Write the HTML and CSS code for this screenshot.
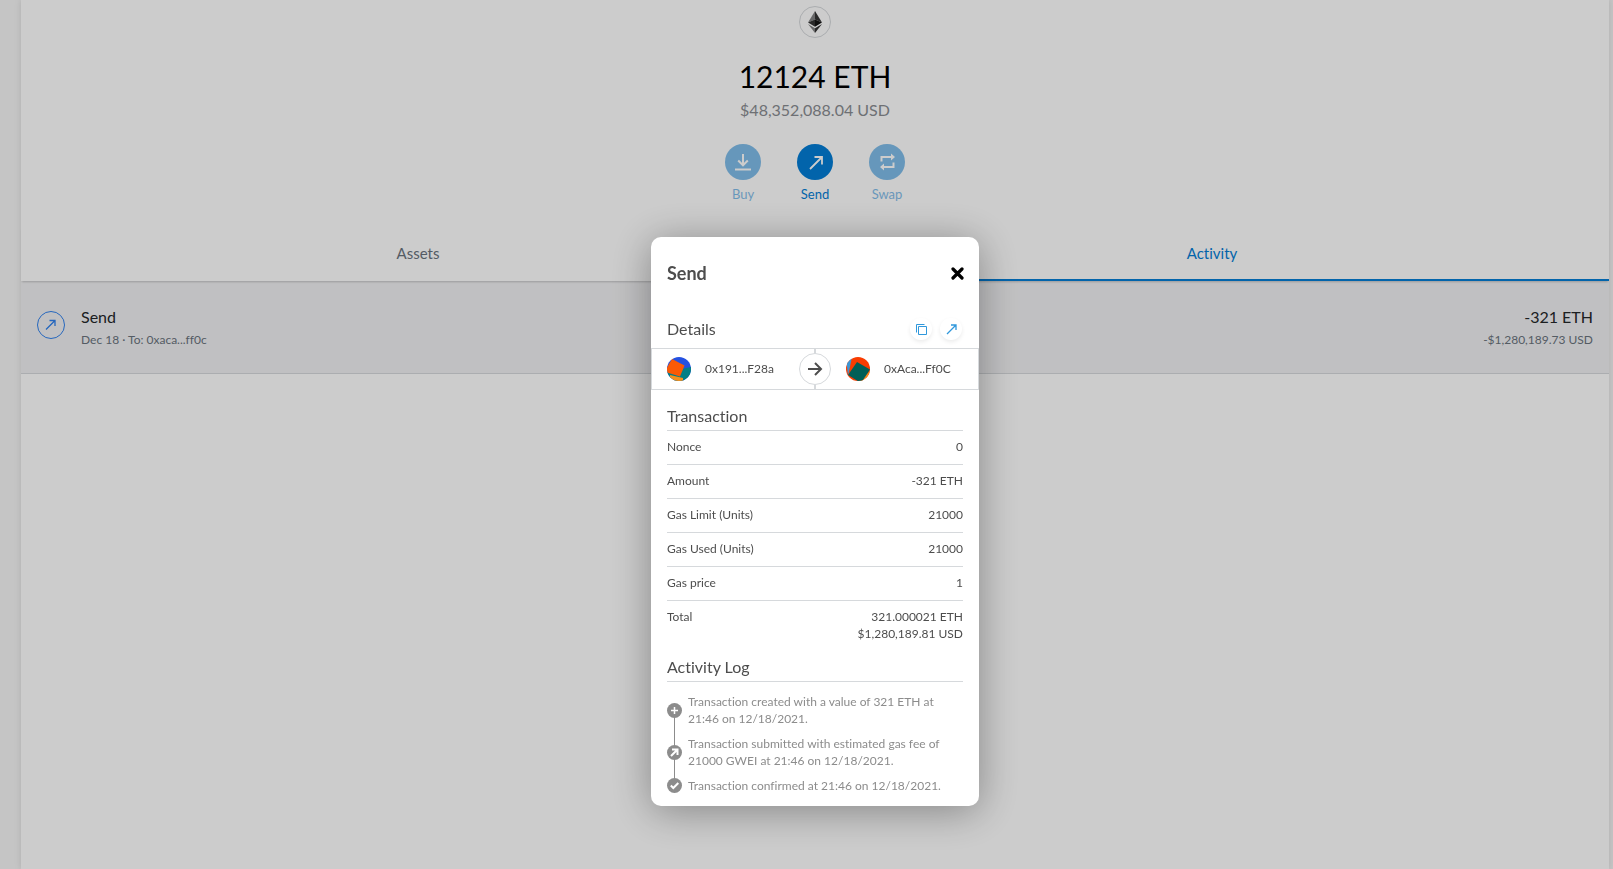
FILE: index.html
```html
<!DOCTYPE html>
<html lang="en">
<head>
<meta charset="utf-8">
<title>Wallet</title>
<link rel="stylesheet" href="styles.css">
</head>
<body>
<main class="wallet">
  <section class="overview">
    <div class="token">
      <svg width="16" height="24" viewBox="0 0 16 24" aria-hidden="true">
        <path d="M8 1 1 12.5 8 9.5z" fill="#828384"/><path d="M8 1v8.500l7 3z" fill="#343434"/>
        <path d="M1 12.500 8 9.500v7.200z" fill="#343434"/><path d="m15 12.500-7-3v7.200z" fill="#131313"/>
        <path d="M1 14l7 4.200V23z" fill="#828384"/><path d="M15 14l-7 4.200V23z" fill="#343434"/>
      </svg>
    </div>
    <h1 class="balance">12124 ETH</h1>
    <p class="fiat">$48,352,088.04 USD</p>
    <div class="actions">
      <button class="action faded" type="button">
        <span class="action-icon"><svg width="18" height="18" viewBox="0 0 18 18" fill="none" stroke="#fff" stroke-width="2"><path d="M9 1v11M4.200 7.500 9 12.300l4.800-4.800M1 16.500h16"/></svg></span>Buy
      </button>
      <button class="action" type="button">
        <span class="action-icon"><svg width="18" height="18" viewBox="0 0 18 18" fill="none" stroke="#fff" stroke-width="1.800"><path d="M4 16 15.500 4.500M8.500 4h7.500v7.500"/></svg></span>Send
      </button>
      <button class="action faded" type="button">
        <span class="action-icon"><svg width="18" height="18" viewBox="0 0 18 18" fill="none" stroke="#fff" stroke-width="2"><path d="M3.500 8.500V4H14M15.500 9.500V14H5"/><path d="M13 .500 17 4l-4 3.500zM6 10.500 2 14l4 3.500z" fill="#fff" stroke="none"/></svg></span>Swap
      </button>
    </div>
  </section>
  <nav class="tabs">
    <button class="tab" type="button">Assets</button>
    <button class="tab active" type="button">Activity</button>
  </nav>
  <section class="activity">
    <svg class="activity-icon" width="28" height="28" viewBox="0 0 28 28" fill="none" stroke="#2f80ed"><circle cx="14" cy="14" r="13.500"/><path d="m9 18.500 8.500-8.500M12.500 9.500h5.500v5.500" stroke-width="1.300"/></svg>
    <div class="activity-text">
      <h2 class="activity-title">Send</h2>
      <p class="activity-sub">Dec 18 · To: 0xaca...ff0c</p>
    </div>
    <div class="activity-amount">
      <p class="activity-title">-321 ETH</p>
      <p class="activity-sub">-$1,280,189.73 USD</p>
    </div>
  </section>
</main>

<div class="overlay">
  <div class="modal" role="dialog" aria-labelledby="modal-title">
    <header class="modal-head">
      <h2 class="modal-title" id="modal-title">Send</h2>
      <button class="close" type="button" aria-label="Close"><svg width="13" height="13" viewBox="0 0 13 13" stroke="#000" stroke-width="3.200" stroke-linecap="round"><path d="m2 2 9 9M11 2l-9 9"/></svg></button>
    </header>
    <div class="details">
      <h3 class="heading">Details</h3>
      <div class="tools">
        <button class="tool" type="button" aria-label="Copy"><svg width="11" height="11" viewBox="0 0 11 11" fill="none" stroke="#3098dc"><path d="M2.500 2.500h8v8h-8zM.500 8.500v-8h8"/></svg></button>
        <button class="tool" type="button" aria-label="View on explorer"><svg width="11" height="11" viewBox="0 0 11 11" fill="none" stroke="#3098dc" stroke-width="1.300"><path d="M1 10 10 1M5 1h5v5"/></svg></button>
      </div>
    </div>
    <div class="parties">
      <div class="party">
        <svg width="24" height="24" viewBox="0 0 24 24"><defs><clipPath id="disc"><circle cx="12" cy="12" r="12"/></clipPath></defs><g clip-path="url(#disc)"><path fill="#2451e1" d="M0 0h24v24H0z"/><path fill="#037f86" d="M0 15 24 10v14H0z"/><path fill="#f5901c" d="m3 18 13 3v4H3z"/><path fill="#fb5a05" d="M-2 14 5 2l12.500 6.500-4.500 11L0 15.500z"/></g></svg>
        <span>0x191...F28a</span>
      </div>
      <div class="arrow"><svg width="16" height="16" viewBox="0 0 16 16" fill="none" stroke="#4d4d4d" stroke-width="2"><path d="M1 8h13M8 2l6 6-6 6"/></svg></div>
      <div class="party recipient">
        <svg width="24" height="24" viewBox="0 0 24 24"><g clip-path="url(#disc)"><path fill="#f93c01" d="M0 0h24v24H0z"/><path fill="#3c96d4" d="M0 0h6L2 19z"/><path fill="#f5881b" d="M24 14v10H13z"/><path fill="#015f57" d="M11 5 24 12.500 15 26 2 18z"/></g></svg>
        <span>0xAca...Ff0C</span>
      </div>
    </div>
    <section class="block">
      <h3 class="heading ruled">Transaction</h3>
      <table class="rows">
        <tr><th scope="row">Nonce</th><td>0</td></tr>
        <tr><th scope="row">Amount</th><td>-321 ETH</td></tr>
        <tr><th scope="row">Gas Limit (Units)</th><td>21000</td></tr>
        <tr><th scope="row">Gas Used (Units)</th><td>21000</td></tr>
        <tr><th scope="row">Gas price</th><td>1</td></tr>
        <tr><th scope="row">Total</th><td>321.000021 ETH<br>$1,280,189.81 USD</td></tr>
      </table>
    </section>
    <section class="block log-block">
      <h3 class="heading ruled">Activity Log</h3>
      <ol class="log">
        <li><svg width="15" height="15" viewBox="0 0 15 15" fill="none" stroke="#fff" stroke-width="1.500"><circle cx="7.500" cy="7.500" r="7.500" fill="#8c8c8c" stroke="none"/><path d="M7.500 4v7M4 7.500h7"/></svg><span>Transaction created with a value of 321 ETH at 21:46 on 12/18/2021.</span></li>
        <li><svg width="15" height="15" viewBox="0 0 15 15" fill="none" stroke="#fff" stroke-width="2"><circle cx="7.500" cy="7.500" r="7.500" fill="#8c8c8c" stroke="none"/><path d="m4 11 6-6M5 4.500h5.500V10"/></svg><span>Transaction submitted with estimated gas fee of 21000 GWEI at 21:46 on 12/18/2021.</span></li>
        <li><svg width="15" height="15" viewBox="0 0 15 15" fill="none" stroke="#fff" stroke-width="2"><circle cx="7.500" cy="7.500" r="7.500" fill="#8c8c8c" stroke="none"/><path d="m3.800 7.500 2.500 2.500 5-5"/></svg><span>Transaction confirmed at 21:46 on 12/18/2021.</span></li>
      </ol>
    </section>
  </div>
</div>
</body>
</html>
```

FILE: styles.css
```css
* { box-sizing: border-box; }
body {
  margin: 0;
  padding: 0 4px 0 21px;
  background: #f7f7f7;
  font-family: Lato, "Liberation Sans", sans-serif;
  font-variant-ligatures: none;
  color: #24272a;
}
h1, h2, h3, p, ol { margin: 0; padding: 0; font-weight: 400; }
button { font: inherit; border: 0; padding: 0; background: none; color: inherit; }
svg { display: block; flex: none; }

.wallet {
  min-height: 100vh;
  background: #fff;
  box-shadow: 0 0 7px rgba(0, 0, 0, .12);
}
.overview {
  display: flex;
  flex-direction: column;
  align-items: center;
  padding-top: 6px;
}
.token {
  display: grid;
  place-items: center;
  width: 32px;
  height: 32px;
  border: 1px solid #d6d9dc;
  border-radius: 50%;
}
.balance {
  margin-top: 16px;
  font-size: 30px;
  line-height: 44px;
  color: #000;
}
.fiat { font-size: 16px; line-height: 24px; color: #8a8d92; }
.actions { display: flex; margin-top: 22px; }
.action {
  display: flex;
  flex-direction: column;
  align-items: center;
  gap: 5px;
  width: 72px;
  font-size: 13px;
  line-height: 18px;
  color: #037dd6;
}
.action-icon {
  display: grid;
  place-items: center;
  width: 36px;
  height: 36px;
  border-radius: 50%;
  background: #037dd6;
}
.faded { opacity: .5; }

.tabs {
  display: flex;
  margin-top: 24px;
  box-shadow: 0 2px 2px -1px rgba(0, 0, 0, .2);
  position: relative;
}
.tab {
  flex: 1;
  height: 54px;
  border-bottom: 2px solid transparent;
  font-size: 15px;
  color: #6a737d;
}
.active { color: #037dd6; border-color: #037dd6; }

.activity {
  display: flex;
  align-items: center;
  gap: 16px;
  height: 93px;
  padding: 0 16px;
  background: #f1f1f3;
  border-bottom: 1px solid #d6d9dc;
}
.activity-icon { margin-bottom: 4px; }
.activity-title { padding-top: 2px; font-size: 16px; line-height: 24px; color: #24272a; }
.activity-sub { font-size: 12px; line-height: 22px; color: #6a737d; }
.activity-amount { margin-left: auto; text-align: right; }

.overlay {
  position: fixed;
  inset: 0;
  display: flex;
  justify-content: center;
  align-items: flex-start;
  padding: 237px 4px 0 21px;
  background: rgba(0, 0, 0, .2);
}
.modal {
  width: 328px;
  padding-bottom: 12px;
  border-radius: 10px;
  background: #fff;
  box-shadow: 0 5px 40px rgba(0, 0, 0, .35);
  color: #4d4d4d;
  font-size: 12px;
  line-height: 17px;
}
.modal-head {
  display: flex;
  justify-content: space-between;
  align-items: center;
  height: 72px;
  padding: 0 15px 0 16px;
}
.modal-title { font-size: 18px; line-height: 24px; font-weight: 700; }
.details {
  display: flex;
  justify-content: space-between;
  align-items: center;
  height: 39px;
  padding: 1px 17px 0 16px;
}
.heading { font-size: 16px; line-height: 24px; }
.tools { display: flex; gap: 8px; }
.tool {
  display: grid;
  place-items: center;
  width: 22px;
  height: 22px;
  border-radius: 50%;
  box-shadow: 0 2px 4px rgba(0, 0, 0, .08);
}
.parties {
  display: flex;
  align-items: center;
  height: 42px;
  border: 1px solid #d6d9dc;
  background: linear-gradient(#d6d9dc, #d6d9dc) center / 2px 100% no-repeat;
}
.party {
  flex: 1;
  display: flex;
  align-items: center;
  gap: 14px;
  padding-left: 15px;
}
.party span { padding-bottom: 2px; }
.arrow {
  display: grid;
  place-items: center;
  width: 32px;
  height: 32px;
  border: 1px solid #d6d9dc;
  border-radius: 50%;
  background: #fff;
}
.block { padding: 14px 16px 0; }
.ruled { padding-bottom: 2px; border-bottom: 1px solid #d6d9dc; }
.rows { width: 100%; border-collapse: collapse; }
.rows th, .rows td { padding: 7px 0 9px; vertical-align: top; }
.rows th { font-weight: 400; text-align: left; }
.rows td { text-align: right; }
.rows tr + tr { border-top: 1px solid #d6d9dc; }
.log-block { padding-top: 4px; }
.log {
  display: flex;
  flex-direction: column;
  gap: 8px;
  margin-top: 11px;
  list-style: none;
  color: #8c8c8c;
  background: linear-gradient(#8c8c8c, #8c8c8c) 7px 18px / 1px calc(100% - 27px) no-repeat;
}
.log li { display: flex; align-items: center; gap: 6px; }
```
